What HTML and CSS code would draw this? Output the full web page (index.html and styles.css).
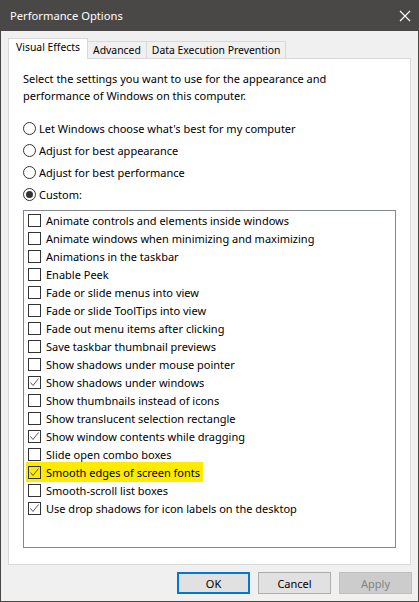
FILE: index.html
```html
<!DOCTYPE html>
<html>
<head>
<meta charset="utf-8">
<link rel="stylesheet" href="styles.css">
</head>
<body>
<div class="window">
  <div class="titlebar">
    <span class="title">Performance Options</span>
    <svg class="close" width="12" height="12" viewBox="0 0 12 12"><path d="M1 1 L11 11 M11 1 L1 11" stroke="#ffffff" stroke-width="1.1" fill="none"/></svg>
  </div>
  <div class="content">
    <div class="tabs">
      <div class="tab selected">Visual Effects</div>
      <div class="tab">Advanced</div>
      <div class="tab">Data Execution Prevention</div>
    </div>
    <div class="panel">
      <p class="desc">Select the settings you want to use for the appearance and<br>performance of Windows on this computer.</p>
      <div class="radios">
        <div class="radio-row"><span class="radio"></span>Let Windows choose what's best for my computer</div>
        <div class="radio-row"><span class="radio"></span>Adjust for best appearance</div>
        <div class="radio-row"><span class="radio"></span>Adjust for best performance</div>
        <div class="radio-row"><span class="radio on"></span>Custom:</div>
      </div>
      <div class="listbox">
        <div class="item"><span class="cb"></span>Animate controls and elements inside windows</div>
        <div class="item"><span class="cb"></span>Animate windows when minimizing and maximizing</div>
        <div class="item"><span class="cb"></span>Animations in the taskbar</div>
        <div class="item"><span class="cb"></span>Enable Peek</div>
        <div class="item"><span class="cb"></span>Fade or slide menus into view</div>
        <div class="item"><span class="cb"></span>Fade or slide ToolTips into view</div>
        <div class="item"><span class="cb"></span>Fade out menu items after clicking</div>
        <div class="item"><span class="cb"></span>Save taskbar thumbnail previews</div>
        <div class="item"><span class="cb"></span>Show shadows under mouse pointer</div>
        <div class="item"><span class="cb checked"><svg viewBox="0 0 11 11" width="11" height="11"><path d="M1.5 5.5 L4 8.5 L9.5 1.5" stroke="#5a5a5a" stroke-width="1" fill="none"/></svg></span>Show shadows under windows</div>
        <div class="item"><span class="cb"></span>Show thumbnails instead of icons</div>
        <div class="item"><span class="cb"></span>Show translucent selection rectangle</div>
        <div class="item"><span class="cb checked"><svg viewBox="0 0 11 11" width="11" height="11"><path d="M1.5 5.5 L4 8.5 L9.5 1.5" stroke="#5a5a5a" stroke-width="1" fill="none"/></svg></span>Show window contents while dragging</div>
        <div class="item"><span class="cb"></span>Slide open combo boxes</div>
        <div class="item"><span class="hl"><span class="cb checked"><svg viewBox="0 0 11 11" width="11" height="11"><path d="M1.5 5.5 L4 8.5 L9.5 1.5" stroke="#5a5a5a" stroke-width="1" fill="none"/></svg></span>Smooth edges of screen fonts</span></div>
        <div class="item"><span class="cb"></span>Smooth-scroll list boxes</div>
        <div class="item"><span class="cb checked"><svg viewBox="0 0 11 11" width="11" height="11"><path d="M1.5 5.5 L4 8.5 L9.5 1.5" stroke="#5a5a5a" stroke-width="1" fill="none"/></svg></span>Use drop shadows for icon labels on the desktop</div>
      </div>
    </div>
    <div class="buttons">
      <div class="btn default">OK</div>
      <div class="btn">Cancel</div>
      <div class="btn disabled">Apply</div>
    </div>
  </div>
</div>
</body>
</html>
```
FILE: styles.css
```css
* { box-sizing: border-box; }
html, body { margin: 0; padding: 0; }
body {
  width: 419px;
  height: 602px;
  font-family: "Noto Sans", "Open Sans", sans-serif;
  font-size: 11px;
  color: #000;
  background: #f0f0f0;
  overflow: hidden;
}
.window {
  width: 419px;
  height: 602px;
  border: 1px solid #4a4846;
  border-top: none;
  background: #f0f0f0;
  display: flex;
  flex-direction: column;
}
.titlebar {
  height: 31px;
  margin: 0 -1px;
  background: #4a4846;
  display: flex;
  align-items: center;
  justify-content: space-between;
  padding: 0 8px 0 10px;
  color: #fff;
  font-size: 11.2px;
}
.title { margin-top: -1px; }
.tabs {
  display: flex;
  align-items: flex-end;
  height: 20px;
  font-size: 10.4px;
}
.content {
  flex: 1;
  padding: 7px 6px 0 7px;
  display: flex;
  flex-direction: column;
}
.tab {
  height: 17px;
  border: 1px solid #d9d9d9;
  border-bottom: none;
  padding: 0 5px 0 5px;
  display: flex;
  align-items: center;
  background: #f0f0f0;
  margin-left: -1px;
}
.tab.selected {
  height: 21px;
  margin-left: 0;
  margin-bottom: -1px;
  background: #fff;
  padding: 1px 7px 0 7px;
  position: relative;
  z-index: 1;
  align-items: flex-start;
}
.panel {
  width: 403px;
  height: 507px;
  background: #fff;
  border: 1px solid #d9d9d9;
  padding: 11px 0 0 14px;
}
.desc {
  margin: 0;
  line-height: 17px;
}
.radios {
  margin-top: 13px;
  display: flex;
  flex-direction: column;
}
.radio-row {
  height: 22px;
  display: flex;
  align-items: center;
}
.radio {
  width: 13px;
  height: 13px;
  border: 1px solid #333;
  border-radius: 50%;
  margin-right: 3px;
  display: flex;
  align-items: center;
  justify-content: center;
  flex-shrink: 0;
}
.radio.on::after {
  content: "";
  width: 7px;
  height: 7px;
  border-radius: 50%;
  background: #333;
}
.listbox {
  margin-top: 5px;
  width: 373px;
  height: 338px;
  border: 1px solid #828790;
  padding: 0 0 0 4px;
}
.item {
  height: 18px;
  display: flex;
  align-items: center;
}
.cb {
  width: 13px;
  height: 13px;
  border: 1px solid #333;
  margin-right: 5px;
  flex-shrink: 0;
  display: flex;
  align-items: center;
  justify-content: center;
  background: #fff;
}
.cb svg { display: block; }
.hl {
  display: flex;
  align-items: center;
  height: 20px;
  background: #ffeb00;
  margin-left: -2px;
  padding: 0 3px 0 2px;
}
.hl .cb { background: transparent; }
.buttons {
  display: flex;
  justify-content: flex-end;
  gap: 8px;
  margin-top: 7px;
}
.btn {
  width: 73px;
  height: 22px;
  background: #e1e1e1;
  border: 1px solid #adadad;
  display: flex;
  align-items: center;
  justify-content: center;
}
.btn.default {
  border: 2px solid #0078d7;
}
.btn.disabled {
  background: #cccccc;
  border-color: #bfbfbf;
  color: #838383;
}
```
